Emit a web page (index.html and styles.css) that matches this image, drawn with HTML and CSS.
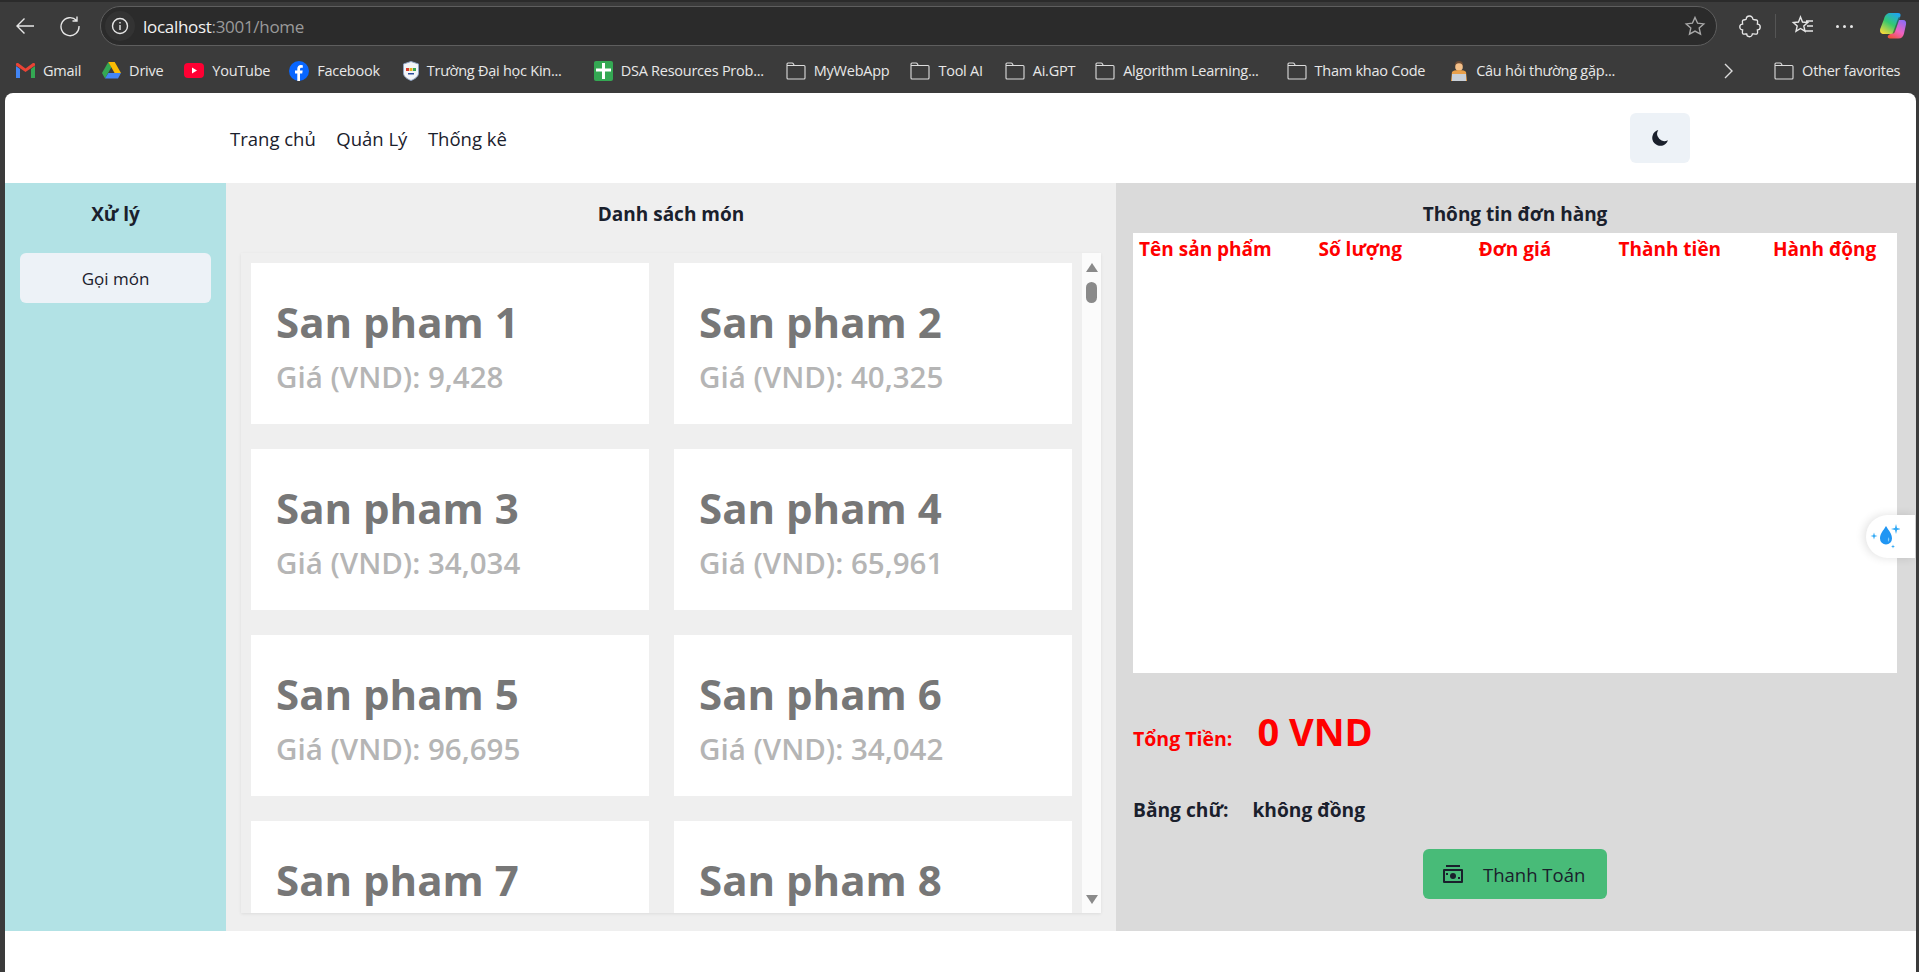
FILE: index.html
```html
<!DOCTYPE html>
<html lang="vi">
<head>
    <meta charset="UTF-8">
    <title>Trang chủ</title>
    <link rel="stylesheet" href="styles.css">
</head>
<body>
    <div class="toolbar">
        <svg class="tool-icon" width="22" height="22" viewBox="0 0 22 22"><path d="M20 11H3M10.500 3.500 3 11l7.500 7.500"/></svg>
        <svg class="tool-icon reload" width="22" height="22" viewBox="0 0 22 22"><path d="M17.600 5.500A9 9 0 1 0 20 11M18 1.500v4.500h-4.500"/></svg>
        <div class="address">
            <span class="site-info">
                <svg class="tool-icon" width="18" height="18" viewBox="0 0 18 18"><circle cx="9" cy="9" r="7.500"/><path d="M9 8v5M9 5v1.400"/></svg>
            </span>
            <span class="url">localhost<span class="url-dim">:3001/home</span></span>
            <svg class="tool-icon star" width="22" height="22" viewBox="0 0 22 22"><path d="m11 2.500 2.600 5.700 6.200.7-4.600 4.200 1.300 6.100-5.500-3.100-5.500 3.100 1.300-6.100-4.600-4.200 6.200-.7z"/></svg>
        </div>
        <div class="tool-right">
            <svg class="tool-icon" width="22" height="24" viewBox="0 0 23 24"><path d="M7.500 5a3.500 3.500 0 0 1 7 0c0 .8 3.500 0 4.500 1s.2 3 .2 4a3 3 0 0 1 0 6c0 1 .8 3-.2 4s-4 .2-5 .2a3 3 0 0 1-6 0c-1 0-3 .8-4-.2s-.2-3-.2-4a3 3 0 0 1 0-6c0-1-.8-3 .2-4s3.500 0 3.500-1z"/></svg>
            <span class="tool-sep"></span>
            <svg class="tool-icon" width="24" height="24" viewBox="0 0 24 24"><path d="m9.500 3 2 5 5.200.5-3.900 3.500 1.200 5.200-4.500-2.700L5 17.200 6.200 12 2.300 8.500l5.200-.5zM15 7h7M16 12h6M14 17h8"/></svg>
            <span class="dots"><i></i><i></i><i></i></span>
            <svg class="copilot" width="28" height="28" viewBox="0 0 28 28">
                <defs>
                    <linearGradient id="cp-a" x1="0.800" y1="0" x2="0.200" y2="1"><stop offset="0" stop-color="#1fa4f0"/><stop offset=".5" stop-color="#35c96f"/><stop offset="1" stop-color="#f4d93a"/></linearGradient>
                    <linearGradient id="cp-b" x1="0.800" y1="0" x2="0.200" y2="1"><stop offset="0" stop-color="#8f6cf5"/><stop offset=".55" stop-color="#ef62c0"/><stop offset="1" stop-color="#f2503a"/></linearGradient>
                </defs>
                <path fill="url(#cp-b)" d="M19 8h5c2.500 0 3.500 2 3 4.500l-2 9c-.6 3-2.500 5-5.500 5H11c-2 0-3-1.500-1.800-3L15 19z"/>
                <path fill="url(#cp-a)" d="M11 1h8c2.500 0 3 1.500 2.300 3.500L16 19c-.8 2.200-2.300 3-4.500 3H5c-3 0-4.500-2-3.800-5L5 7c.8-3.500 3-6 6-6z"/>
                <path fill="#2b2b2b" opacity=".55" d="M19.500 5.500 21 5l-4.800 14.300c-.5 1.300-1.400 2.200-2.700 2.500z"/>
            </svg>
        </div>
    </div>

    <div class="bookmarks">
        <a class="mark">
            <svg width="19" height="15" viewBox="0 0 19 15"><path fill="#ea4335" d="M0 2.500 9.500 9 19 2.500V1c0-1-1.500-1.500-2.400-.8L9.500 5.500 2.400.2C1.500-.5 0 0 0 1z"/><path fill="#4285f4" d="M0 3v12h4V6z"/><path fill="#34a853" d="M19 3v12h-4V6z"/></svg>
            Gmail
        </a>
        <a class="mark">
            <svg width="19" height="17" viewBox="0 0 19 17"><path fill="#34a853" d="M6.300 0 0 11l3 5.500L9.500 5z"/><path fill="#fbbc04" d="M6.300 0h6.400L19 11h-6.400z"/><path fill="#4285f4" d="M19 11H6.300L3 16.500h13z"/></svg>
            Drive
        </a>
        <a class="mark gap-19">
            <svg width="20" height="15" viewBox="0 0 20 15"><rect width="20" height="15" rx="4" fill="#ff0033"/><path fill="#fff" d="m8 4.500 5 3-5 3z"/></svg>
            YouTube
        </a>
        <a class="mark gap-23">
            <svg width="20" height="20" viewBox="0 0 20 20"><circle cx="10" cy="10" r="10" fill="#0866ff"/><path fill="#fff" d="M8.300 20v-7.500H6V9.500h2.300V7.800c0-2.500 1.400-3.800 3.600-3.800l1.900.2v2.500h-1.300c-1.200 0-1.500.7-1.500 1.400v1.400h2.700l-.5 3h-2.200V20z"/></svg>
            Facebook
        </a>
        <a class="mark gap-32">
            <svg width="16" height="20" viewBox="0 0 16 20"><path fill="#f3f5f8" stroke="#8fa3c4" d="M8 .5 15.500 3v9c0 3.700-3.700 6-7.500 7.500C4.200 18 .5 15.700.5 12V3z"/><path fill="#d8392c" d="M3 7h3v3H3z"/><path fill="#e5b21f" d="M6.500 7h3v3h-3z"/><path fill="#3aa655" d="M10 7h3v3h-3z"/><path fill="#2b4c9b" d="M5 12h6v1.500H5z"/></svg>
            Trường Đại học Kin...
        </a>
        <a class="mark gap-22">
            <svg width="19" height="20" viewBox="0 0 19 20"><rect width="19" height="20" rx="2" fill="#34a853"/><path fill="#fff" d="M8 2h3v5.500h6v3h-6V18H8v-7.500H2v-3h6z"/></svg>
            DSA Resources Prob...
        </a>
        <a class="mark"><svg class="folder" width="20" height="18" viewBox="0 0 20 18"><path d="M1 3.500V2q0-1 1-1h4q1 0 1.500 1l.7 1.500H18q1 0 1 1V16q0 1-1 1H2q-1 0-1-1zh7.200"/></svg>MyWebApp</a>
        <a class="mark gap-22"><svg class="folder" width="20" height="18" viewBox="0 0 20 18"><path d="M1 3.500V2q0-1 1-1h4q1 0 1.500 1l.7 1.500H18q1 0 1 1V16q0 1-1 1H2q-1 0-1-1zh7.200"/></svg>Tool AI</a>
        <a class="mark gap-20"><svg class="folder" width="20" height="18" viewBox="0 0 20 18"><path d="M1 3.500V2q0-1 1-1h4q1 0 1.500 1l.7 1.500H18q1 0 1 1V16q0 1-1 1H2q-1 0-1-1zh7.200"/></svg>Ai.GPT</a>
        <a class="mark gap-28"><svg class="folder" width="20" height="18" viewBox="0 0 20 18"><path d="M1 3.500V2q0-1 1-1h4q1 0 1.500 1l.7 1.500H18q1 0 1 1V16q0 1-1 1H2q-1 0-1-1zh7.200"/></svg>Algorithm Learning...</a>
        <a class="mark gap-25"><svg class="folder" width="20" height="18" viewBox="0 0 20 18"><path d="M1 3.500V2q0-1 1-1h4q1 0 1.500 1l.7 1.500H18q1 0 1 1V16q0 1-1 1H2q-1 0-1-1zh7.200"/></svg>Tham khao Code</a>
        <a class="mark">
            <svg width="18" height="20" viewBox="0 0 18 20"><path fill="#6d4c35" d="M5 4q0-4 4-4t4 4v1H5z"/><circle cx="9" cy="6" r="3.800" fill="#f4c089"/><path fill="#e9a04a" d="M2 11q1-2 7-2t7 2l1 9H1z"/><rect x="2" y="13" width="14" height="7" fill="#c9d0d8"/></svg>
            Câu hỏi thường gặp...
        </a>
        <svg class="tool-icon more" width="14" height="18" viewBox="0 0 14 18"><path d="m4 2 7 7-7 7"/></svg>
        <span class="mark-sep"></span>
        <a class="mark"><svg class="folder" width="20" height="18" viewBox="0 0 20 18"><path d="M1 3.500V2q0-1 1-1h4q1 0 1.500 1l.7 1.500H18q1 0 1 1V16q0 1-1 1H2q-1 0-1-1zh7.200"/></svg>Other favorites</a>
    </div>

    <div class="page">
        <nav class="navbar">
            <a>Trang chủ</a>
            <a>Quản Lý</a>
            <a>Thống kê</a>
            <button class="theme-btn" type="button">
                <svg width="20" height="20" viewBox="0 0 20 20"><path fill="#1a202c" d="M8.300 2.100a8 8 0 1 0 9.600 10.100A7.200 7.200 0 0 1 8.300 2.100z"/></svg>
            </button>
        </nav>

        <div class="main">
            <aside class="sidebar">
                <h2>Xử lý</h2>
                <button class="side-btn" type="button">Gọi món</button>
            </aside>

            <section class="menu">
                <h2>Danh sách món</h2>
                <div class="menu-box">
                    <div class="product-list" id="products"></div>
                    <div class="scrollbar">
                        <span class="arrow-up"></span>
                        <span class="thumb"></span>
                        <span class="arrow-down"></span>
                    </div>
                </div>
            </section>

            <section class="order">
                <h2>Thông tin đơn hàng</h2>
                <div class="order-table">
                    <table>
                        <thead>
                            <tr>
                                <th>Tên sản phẩm</th>
                                <th>Số lượng</th>
                                <th>Đơn giá</th>
                                <th>Thành tiền</th>
                                <th>Hành động</th>
                            </tr>
                        </thead>
                    </table>
                </div>
                <div class="total">
                    <span class="total-label">Tổng Tiền:</span>
                    <span class="total-value">0 VND</span>
                </div>
                <div class="in-words">
                    <span>Bằng chữ:</span>
                    <span>không đồng</span>
                </div>
                <div class="pay-row">
                    <button class="pay-btn" type="button">
                        <svg width="20" height="18" viewBox="0 0 20 18"><path fill="#1a202c" d="M3 0h14v2H3zM1 4h18q1 0 1 1v12q0 1-1 1H1q-1 0-1-1V5q0-1 1-1zm1 2v10h16V6z"/><circle cx="10" cy="11" r="3" fill="#1a202c"/><path fill="#1a202c" d="M3 8h2v2H3zM15 12h2v2h-2z"/></svg>
                        Thanh Toán
                    </button>
                </div>
            </section>
        </div>

        <div class="float-tool">
            <svg width="30" height="27" viewBox="0 0 30 27">
                <path fill="#2196f3" d="M16 3c2.500 4.500 6 7.500 6 12.500a6 6 0 0 1-12 0C10 10.500 13.500 7.500 16 3z"/>
                <path fill="#8ed0fb" d="M19 14q1 3-1 5-1-3 1-5z"/>
                <path fill="#2ea8f5" d="m4 9.500.8 2.700 2.700.8-2.700.8L4 16.500l-.8-2.700-2.700-.8 2.700-.8zM26 1l1 4 4 1-4 1-1 4-1-4-4-1 4-1zM23 21.500l.5 1.500 1.500.5-1.500.5-.5 1.500-.5-1.500-1.500-.5 1.500-.5z"/>
            </svg>
        </div>
    </div>

    <script>
        const products = [
            ['San pham 1', '9,428'],
            ['San pham 2', '40,325'],
            ['San pham 3', '34,034'],
            ['San pham 4', '65,961'],
            ['San pham 5', '96,695'],
            ['San pham 6', '34,042'],
            ['San pham 7', '71,206'],
            ['San pham 8', '58,317']
        ];

        const list = document.getElementById('products');
        products.forEach(([name, price]) => {
            const card = document.createElement('div');
            card.className = 'product-card';
            card.innerHTML = `<h3>${name}</h3><p>Giá (VND): ${price}</p>`;
            list.appendChild(card);
        });
    </script>
</body>
</html>
```

FILE: styles.css
```css
* {
    box-sizing: border-box;
}

body {
    margin: 0;
    height: 972px;
    overflow: hidden;
    background: #3b3b3b;
    font-family: "Open Sans", "Noto Sans", sans-serif;
    color: #1a202c;
}

h2, h3, p {
    margin: 0;
}

/* browser bars */
.toolbar {
    display: flex;
    align-items: center;
    height: 46px;
    padding: 4px 0 0 14px;
    border-top: 2px solid #2b2b2b;
}

.tool-icon {
    flex: none;
    fill: none;
    stroke: #e6e6e6;
    stroke-width: 1.4;
}

.reload {
    margin-left: 23px;
}

.address {
    display: flex;
    align-items: center;
    flex: none;
    width: 1617px;
    height: 40px;
    margin-left: 19px;
    padding: 0 10px 0 4px;
    background: #2b2b2b;
    border: 1px solid #5e5e5e;
    border-radius: 20px;
}

.site-info {
    display: flex;
    align-items: center;
    justify-content: center;
    width: 30px;
    height: 30px;
    border-radius: 50%;
    background: #333;
}

.url {
    margin-left: 8px;
    font-size: 17px;
    letter-spacing: -0.3px;
    color: #f2f2f2;
}

.url-dim {
    color: #9a9a9a;
}

.star {
    margin-left: auto;
    stroke: #a8a8a8;
}

.tool-right {
    display: flex;
    align-items: center;
    padding-left: 22px;
}

.tool-sep {
    width: 1px;
    height: 24px;
    margin: 0 15px 0 14px;
    background: #555;
}

.dots {
    display: flex;
    gap: 4px;
    margin: 0 0 0 21px;
}

.dots i {
    width: 3px;
    height: 3px;
    border-radius: 50%;
    background: #e6e6e6;
}

.copilot {
    margin-left: 26px;
}

.bookmarks {
    display: flex;
    align-items: center;
    height: 47px;
    padding: 2px 0 0 16px;
    font-size: 14.500px;
    letter-spacing: -0.25px;
    color: #e8e8e8;
    white-space: nowrap;
}

.mark {
    display: flex;
    align-items: center;
    gap: 8px;
    margin-right: 21px;
}

.gap-19 { margin-right: 19px; }
.gap-20 { margin-right: 20px; }
.gap-22 { margin-right: 22px; }
.gap-23 { margin-right: 23px; }
.gap-25 { margin-right: 25px; }
.gap-28 { margin-right: 28px; }
.gap-32 { margin-right: 32px; }

.folder {
    fill: none;
    stroke: #dcdcdc;
    stroke-width: 1.1;
}

.more {
    margin-left: 85px;
    stroke: #dcdcdc;
}

.mark-sep {
    width: 1px;
    height: 24px;
    margin: 0 18px 0 21px;
    background: #555;
}

/* page */
.page {
    position: relative;
    height: 879px;
    margin: 0 3px 0 5px;
    background: #fff;
    border-radius: 8px 8px 0 0;
}

.navbar {
    display: flex;
    align-items: center;
    gap: 20.500px;
    height: 90px;
    padding-left: 225px;
    font-size: 18.500px;
}

.navbar .theme-btn {
    display: flex;
    align-items: center;
    justify-content: center;
    width: 60px;
    height: 50px;
    margin-left: auto;
    margin-right: 226px;
    background: #edf2f7;
    border: none;
    border-radius: 6px;
}

.main {
    display: flex;
    height: 748px;
}

.main h2 {
    height: 60px;
    padding-top: 17px;
    font-size: 19px;
    font-weight: 700;
    line-height: 28px;
    text-align: center;
}

.sidebar {
    flex: none;
    width: 221px;
    padding: 0 15px;
    background: #b2e2e5;
}

.side-btn {
    display: block;
    width: 191px;
    height: 50px;
    margin: 10px 0 0;
    background: #edf2f7;
    border: none;
    border-radius: 6px;
    font: 500 17px "Open Sans", sans-serif;
    color: #1a202c;
}

.menu {
    flex: none;
    width: 890px;
    padding: 0 15px 0 15px;
    background: #efefef;
}

.menu-box {
    display: flex;
    height: 660px;
    margin-top: 10px;
    box-shadow: 0 1px 3px rgba(0, 0, 0, 0.08);
}

.product-list {
    display: grid;
    grid-template-columns: 398px 398px;
    grid-auto-rows: 161px;
    gap: 25px;
    flex: 1;
    overflow: hidden;
    padding: 10px 0 0 10px;
}

.product-card {
    overflow: hidden;
    padding: 32px 25px 0;
    background: #fff;
}

.product-card h3 {
    font-size: 42px;
    font-weight: 700;
    line-height: 54px;
    color: #777;
}

.product-card p {
    margin-top: 9px;
    font-size: 29.500px;
    font-weight: 600;
    line-height: 38px;
    color: #b5b5b5;
}

.scrollbar {
    display: flex;
    flex-direction: column;
    align-items: center;
    flex: none;
    width: 19px;
    padding: 10px 0 9px;
    background: #fbfbfb;
}

.arrow-up,
.arrow-down {
    width: 0;
    height: 0;
    border-left: 6px solid transparent;
    border-right: 6px solid transparent;
}

.arrow-up {
    border-bottom: 9px solid #8a8a8a;
}

.arrow-down {
    margin-top: auto;
    border-top: 9px solid #8a8a8a;
}

.thumb {
    width: 11px;
    height: 21px;
    margin-top: 10px;
    border-radius: 6px;
    background: #8a8a8a;
}

.order {
    flex: 1;
    padding: 0 19px 0 17px;
    background: #dadada;
}

.order h2 {
    height: 50px;
}

.order-table {
    height: 440px;
    background: #fff;
}

.order-table table {
    width: calc(100% + 10px);
    margin-left: -5px;
    table-layout: fixed;
    border-collapse: collapse;
}

.order-table th {
    height: 32px;
    padding: 0;
    font-size: 19px;
    font-weight: 700;
    color: #f00;
}

.total {
    display: flex;
    align-items: baseline;
    gap: 25px;
    margin-top: 32px;
    color: #f00;
    font-weight: 700;
}

.total-label {
    font-size: 19.500px;
}

.total-value {
    font-size: 38px;
    line-height: 52px;
}

.in-words {
    display: flex;
    gap: 24px;
    margin-top: 39px;
    font-size: 19.200px;
    font-weight: 700;
}

.pay-row {
    display: flex;
    justify-content: center;
    margin-top: 26px;
}

.pay-btn {
    display: flex;
    align-items: center;
    gap: 20px;
    width: 184px;
    height: 50px;
    padding: 0 20px;
    background: #48bb78;
    border: none;
    border-radius: 6px;
    font: 500 18.500px "Open Sans", sans-serif;
    color: #1a202c;
}

.float-tool {
    position: absolute;
    top: 422px;
    right: 1px;
    display: flex;
    align-items: center;
    width: 49px;
    height: 43px;
    padding-left: 4px;
    background: #fff;
    border-radius: 22px 0 0 22px;
    box-shadow: -2px 0 10px rgba(0, 0, 0, 0.12);
}
```
